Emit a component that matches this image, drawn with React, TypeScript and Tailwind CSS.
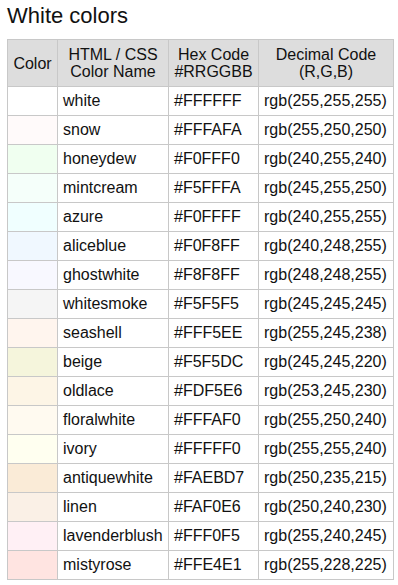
import React from 'react';

const colors = [
  { name: 'white', hex: '#FFFFFF', rgb: 'rgb(255,255,255)' },
  { name: 'snow', hex: '#FFFAFA', rgb: 'rgb(255,250,250)' },
  { name: 'honeydew', hex: '#F0FFF0', rgb: 'rgb(240,255,240)' },
  { name: 'mintcream', hex: '#F5FFFA', rgb: 'rgb(245,255,250)' },
  { name: 'azure', hex: '#F0FFFF', rgb: 'rgb(240,255,255)' },
  { name: 'aliceblue', hex: '#F0F8FF', rgb: 'rgb(240,248,255)' },
  { name: 'ghostwhite', hex: '#F8F8FF', rgb: 'rgb(248,248,255)' },
  { name: 'whitesmoke', hex: '#F5F5F5', rgb: 'rgb(245,245,245)' },
  { name: 'seashell', hex: '#FFF5EE', rgb: 'rgb(255,245,238)' },
  { name: 'beige', hex: '#F5F5DC', rgb: 'rgb(245,245,220)' },
  { name: 'oldlace', hex: '#FDF5E6', rgb: 'rgb(253,245,230)' },
  { name: 'floralwhite', hex: '#FFFAF0', rgb: 'rgb(255,250,240)' },
  { name: 'ivory', hex: '#FFFFF0', rgb: 'rgb(255,255,240)' },
  { name: 'antiquewhite', hex: '#FAEBD7', rgb: 'rgb(250,235,215)' },
  { name: 'linen', hex: '#FAF0E6', rgb: 'rgb(250,240,230)' },
  { name: 'lavenderblush', hex: '#FFF0F5', rgb: 'rgb(255,240,245)' },
  { name: 'mistyrose', hex: '#FFE4E1', rgb: 'rgb(255,228,225)' },
];

export default function App() {
  return (
    <div className="bg-white px-[7px] pt-[3px] text-[#111] font-['Liberation_Sans',Arial,sans-serif]">
      <h2 className="text-[22px] leading-[25px] mb-[11px]">White colors</h2>
      <table className="table-fixed border-collapse w-[386px] text-[16px]">
        <colgroup>
          <col className="w-[50px]" />
          <col className="w-[111px]" />
          <col className="w-[90px]" />
          <col className="w-[135px]" />
        </colgroup>
        <thead>
          <tr className="bg-[#dddddd]">
            <th className="border border-[#c8c8c8] font-normal text-center leading-[17px] py-[6px]">Color</th>
            <th className="border border-[#c8c8c8] font-normal text-center leading-[17px] py-[6px]">HTML / CSS<br />Color Name</th>
            <th className="border border-[#c8c8c8] font-normal text-center leading-[17px] py-[6px]">Hex Code<br />#RRGGBB</th>
            <th className="border border-[#c8c8c8] font-normal text-center leading-[17px] py-[6px]">Decimal Code<br />(R,G,B)</th>
          </tr>
        </thead>
        <tbody>
          {colors.map((c) => (
            <tr key={c.name}>
              <td className="border border-[#c8c8c8]" style={{ backgroundColor: c.hex }}></td>
              <td className="border border-[#c8c8c8] px-[5px] py-[5px] leading-[18px] whitespace-nowrap">{c.name}</td>
              <td className="border border-[#c8c8c8] px-[5px] py-[5px] leading-[18px]">{c.hex}</td>
              <td className="border border-[#c8c8c8] px-[5px] py-[5px] leading-[18px] whitespace-nowrap">{c.rgb}</td>
            </tr>
          ))}
        </tbody>
      </table>
    </div>
  );
}
